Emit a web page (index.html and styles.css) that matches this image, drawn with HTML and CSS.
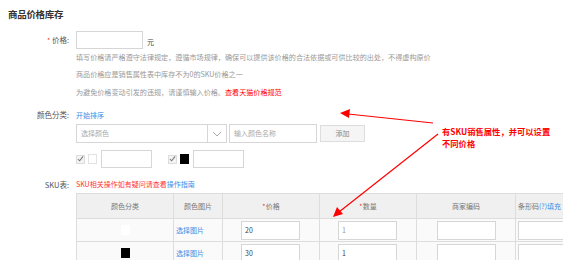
FILE: index.html
```html
<!DOCTYPE html>
<html lang="zh">
<head>
<meta charset="utf-8">
<link rel="stylesheet" href="styles.css">
</head>
<body>
<div class="page">
  <h2 class="title">商品价格库存</h2>

  <div class="row row-price">
    <div class="label"><span class="req">*</span> 价格:</div>
    <div class="field">
      <div class="inline"><span class="input price-input"></span><span class="unit">元</span></div>
      <p class="help">填写价格请严格遵守法律规定，遵循市场规律，确保可以提供该价格的合法依据或可供比较的出处，不得虚构原价</p>
      <p class="help">商品价格应是销售属性表中库存不为0的SKU价格之一</p>
      <p class="help">为避免价格变动引发的违规，请谨慎输入价格。<a class="red-link">查看天猫价格规范</a></p>
    </div>
  </div>

  <div class="row row-color">
    <div class="label">颜色分类:</div>
    <div class="field">
      <a class="blue-link sort">开始排序</a>
      <div class="inline add-row">
        <span class="select"><span class="ph">选择颜色</span><span class="chev"><svg width="10" height="6" viewBox="0 0 10 6"><path d="M1 1l4 4 4-4" fill="none" stroke="#aaa" stroke-width="1"/></svg></span></span>
        <span class="input name-input"><span class="ph">输入颜色名称</span></span>
        <span class="btn">添加</span>
      </div>
      <div class="inline check-row">
        <span class="item"><span class="cb"><svg width="8" height="8" viewBox="0 0 8 8"><path d="M1 4l2 2 4-5" fill="none" stroke="#777" stroke-width="1.2"/></svg></span><span class="sw sw-white"></span><span class="input sw-input"></span></span>
        <span class="item"><span class="cb"><svg width="8" height="8" viewBox="0 0 8 8"><path d="M1 4l2 2 4-5" fill="none" stroke="#777" stroke-width="1.2"/></svg></span><span class="sw sw-black"></span><span class="input sw-input"></span></span>
      </div>
    </div>
  </div>

  <div class="row row-sku">
    <div class="label">SKU表:</div>
    <div class="field">
      <p class="sku-note">SKU相关操作如有疑问请查看<a class="blue-link">操作指南</a></p>
      <div class="table">
        <div class="tr th">
          <div class="c c1">颜色分类</div>
          <div class="c c2">颜色图片</div>
          <div class="c c3"><span class="req">*</span> 价格</div>
          <div class="c c4"><span class="req">*</span> 数量</div>
          <div class="c c5">商家编码</div>
          <div class="c c6 left">条形码 <span class="blue-link">(?)</span> <span class="blue-link">填充</span></div>
        </div>
        <div class="tr td">
          <div class="c c1"><span class="sw-cell white"></span></div>
          <div class="c c2 left"><a class="blue-link">选择图片</a></div>
          <div class="c c3"><span class="input cell-input">20</span></div>
          <div class="c c4"><span class="input cell-input q">1</span></div>
          <div class="c c5"><span class="input cell-input"></span></div>
          <div class="c c6 left"><span class="input cell-input wide"></span></div>
        </div>
        <div class="tr td">
          <div class="c c1"><span class="sw-cell black"></span></div>
          <div class="c c2 left"><a class="blue-link">选择图片</a></div>
          <div class="c c3"><span class="input cell-input">30</span></div>
          <div class="c c4"><span class="input cell-input">1</span></div>
          <div class="c c5"><span class="input cell-input"></span></div>
          <div class="c c6 left"><span class="input cell-input wide"></span></div>
        </div>
      </div>
    </div>
  </div>

  <div class="note">有SKU销售属性，并可以设置<br>不同价格</div>
  <svg class="arrows" width="563" height="260" viewBox="0 0 563 260">
    <line x1="433" y1="123" x2="348" y2="114" stroke="#f00" stroke-width="1.2"/>
    <polygon points="340,113 350,109 349,118" fill="#f00"/>
    <line x1="438" y1="134" x2="339" y2="212" stroke="#f00" stroke-width="1.2"/>
    <polygon points="333,217 337,207 343,214" fill="#f00"/>
  </svg>
</div>
</body>
</html>
```
FILE: styles.css
```css
* { box-sizing: border-box; }
html, body { margin: 0; padding: 0; background: #fff; overflow: hidden; }
body {
  width: 563px; height: 260px;
  font-family: "Noto Sans CJK SC", "Noto Sans", sans-serif;
  font-size: 7px; color: #666;
}
.page { position: relative; width: 563px; height: 260px; padding: 8px 0 0 0; }
p { margin: 0; }
a { text-decoration: none; }
.title {
  margin: 0 0 0 8px; font-size: 9.5px; font-weight: bold; color: #333;
  line-height: 12px; letter-spacing: -0.3px;
}
.row { display: flex; }
.label {
  width: 70px; flex: none; text-align: right; padding-right: 1px;
  font-size: 7.5px; color: #555; line-height: 18px;
}
.field { margin-left: 6px; flex: 1; min-width: 0; }
.req { color: #e4393c; font-size: 7px; }
.inline { display: flex; align-items: center; }
.input { display: inline-block; border: 1px solid #d6d6d6; background: #fff; }
.row-price { margin-top: 11px; }
.row-price .label { line-height: 18px; }
.price-input { width: 67px; height: 18px; }
.unit { margin-left: 4px; color: #444; font-size: 7px; padding-top: 3px; }
.help { color: #999; line-height: 17.5px; font-size: 7.1px; white-space: nowrap; }
.help:first-of-type { margin-top: -0.5px; }
.red-link { color: #f00; }
.blue-link { color: #3a8ee6; }

.row-color { margin-top: 5px; }
.sort { display: block; line-height: 18px; font-size: 7px; }
.add-row { margin-top: 0px; height: 19px; }
.select {
  width: 151px; height: 19px; border: 1px solid #d6d6d6; display: flex; align-items: center;
  justify-content: space-between;
}
.ph { color: #aaa; font-size: 7px; padding-left: 4px; line-height: 17px; }
.chev { width: 19px; height: 17px; border-left: 1px solid #d6d6d6; display: flex; align-items: center; justify-content: center; }
.name-input { width: 88px; height: 19px; margin-left: 2px; }
.btn {
  width: 45px; height: 17px; margin-left: 3px; border: 1px solid #ddd; background: #f5f5f5;
  color: #888; font-size: 7px; text-align: center; line-height: 15px;
}
.check-row { margin-top: 7px; height: 18px; }
.item { display: flex; align-items: center; margin-right: 16px; }
.cb {
  width: 9px; height: 9px; border: 1px solid #ddd; background: #f3f3f3; display: flex;
  align-items: center; justify-content: center;
}
.sw { width: 9px; height: 10px; margin-left: 3px; }
.sw-white { border: 1px solid #e2e2e2; background: #fff; }
.sw-black { background: #000; }
.sw-input { width: 51px; height: 18px; margin-left: 4px; }

.row-sku { margin-top: 8px; }
.row-sku .label { line-height: 17px; }
.sku-note { color: #f33; line-height: 17px; font-size: 7px; }
.table { width: 540px; border-top: 1px solid #ddd; border-left: 1px solid #ddd; }
.tr { display: flex; }
.c {
  flex: none; border-right: 1px solid #ddd; border-bottom: 1px solid #ddd;
  display: flex; align-items: center; justify-content: center;
}
.c.left { justify-content: flex-start; padding-left: 2px; }
.th .c { height: 25px; background: #f0f0f0; color: #777; font-size: 7px; }
.td .c { height: 23px; background: #fafafa; color: #444; font-size: 7px; }
.c1 { width: 97px; }
.c2 { width: 49px; }
.c3 { width: 97px; }
.c4 { width: 97px; }
.c5 { width: 99px; }
.c6 { width: 100px; }
.td .c3 { justify-content: flex-start; padding-left: 18px; }
.td .c4 { justify-content: flex-start; padding-left: 18px; }
.cell-input { width: 59px; height: 19px; padding-left: 3px; line-height: 17px; font-size: 7px; color: #444; }
.cell-input.q { color: #999; }
.cell-input.wide { width: 90px; }
.sw-cell { width: 9px; height: 10px; display: inline-block; }
.sw-cell.white { background: #fff; }
.sw-cell.black { background: #000; }

.note {
  position: absolute; left: 442px; top: 125px;
  color: #f00; font-weight: bold; font-size: 8.3px; line-height: 12px; white-space: nowrap;
}
.arrows { position: absolute; left: 0; top: 0; pointer-events: none; }
```
